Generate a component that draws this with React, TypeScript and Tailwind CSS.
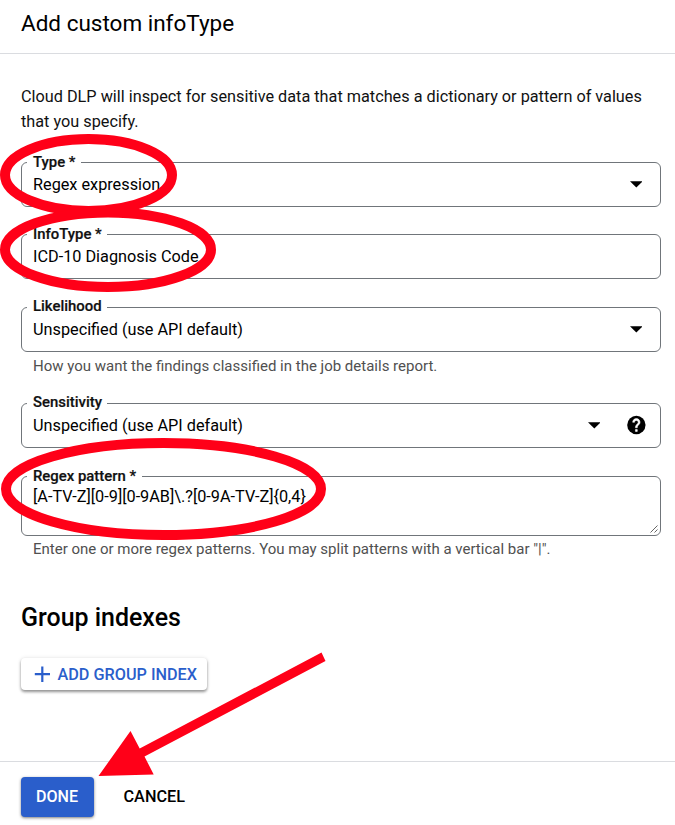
import type { ReactNode } from 'react';

function Caret() {
  return (
    <svg width="12" height="7" viewBox="0 0 12 7" className="shrink-0">
      <path d="M0 0.3h12.6L6.3 6.5z" fill="#000" />
    </svg>
  );
}

function HelpIcon() {
  return (
    <svg width="22" height="22" viewBox="0 0 24 24" className="mb-[2px] shrink-0">
      <circle cx="12.4" cy="12" r="10" fill="#000" />
      <path
        fill="#fff"
        stroke="#fff"
        strokeWidth="0.6"
        transform="translate(0.4 0)"
        d="M13 19h-2v-2h2v2zm2.07-7.75l-.9.92C13.45 12.9 13 13.5 13 15h-2v-.5c0-1.1.45-2.1 1.17-2.83l1.24-1.26c.37-.36.59-.86.59-1.41 0-1.1-.9-2-2-2s-2 .9-2 2H8c0-2.21 1.79-4 4-4s4 1.79 4 4c0 .88-.36 1.68-.93 2.25z"
      />
    </svg>
  );
}

function Field({ label, box, notch, children }: { label: string; box: string; notch: string; children: ReactNode }) {
  return (
    <div className={`relative ml-[21px] flex w-[640px] rounded-[6px] border border-[#70757a] pl-[11px] ${box}`}>
      <span
        className={`absolute left-[5px] h-[18px] bg-white pl-[6px] text-[14.9px] leading-[18px] font-medium whitespace-nowrap text-[#111] [-webkit-text-stroke:0.2px_#111] ${notch}`}
      >
        {label}
      </span>
      {children}
    </div>
  );
}

export default function App() {
  return (
    <div className="relative flex h-[825px] w-[675px] flex-col overflow-hidden bg-white font-[Roboto,sans-serif] text-[16.26px] text-black">
      <header className="flex h-[54px] shrink-0 border-b border-[#dadce0] pt-[8px] pl-[21px]">
        <h1 className="text-[22.5px] leading-[30px] whitespace-nowrap">Add custom infoType</h1>
      </header>
      <main className="flex h-[707px] shrink-0 flex-col">
        <p className="mt-[30px] ml-[21px] h-[78px] text-[16.26px] leading-[25px] whitespace-nowrap text-[#111]">
          Cloud DLP will inspect for sensitive data that matches a dictionary or pattern of values
          <br />
          that you specify.
        </p>
        <Field label="Type *" box="h-[45px] items-center pr-[18px]" notch="-top-[10px] w-[54px]">
          <span className="grow pt-[2px]">Regex expression</span>
          <Caret />
        </Field>
        <Field label="InfoType *" box="mt-[27px] h-[45px] items-center" notch="-top-[10px] w-[80px]">
          <span className="pt-[2px]">ICD-10 Diagnosis Code</span>
        </Field>
        <Field label="Likelihood" box="mt-[28px] h-[45px] items-center pr-[18px]" notch="-top-[11px] w-[80px]">
          <span className="grow pt-[2px]">Unspecified (use API default)</span>
          <Caret />
        </Field>
        <p className="mt-[4px] ml-[33px] h-[47px] text-[15px] leading-[20px] text-[#505050]">
          How you want the findings classified in the job details report.
        </p>
        <Field label="Sensitivity" box="h-[45px] items-center gap-[25px] pr-[13px]" notch="-top-[11px] w-[80px]">
          <span className="grow pt-[2px]">Unspecified (use API default)</span>
          <Caret />
          <HelpIcon />
        </Field>
        <Field label="Regex pattern *" box="mt-[28px] h-[60px] items-end justify-between pr-[2px] pb-[2px]" notch="-top-[10px] w-[115px]">
          <span className="h-[46px] leading-[20px]">{'[A-TV-Z][0-9][0-9AB]\\.?[0-9A-TV-Z]{0,4}'}</span>
          <svg width="8" height="8" viewBox="0 0 8 8" stroke="#555" strokeWidth="0.9">
            <path d="M0.5 7.5l7-7M4.5 7.5l3-3" />
          </svg>
        </Field>
        <p className="mt-[3px] ml-[33px] h-[20px] text-[15px] leading-[20px] text-[#505050]">
          Enter one or more regex patterns. You may split patterns with a vertical bar "|".
        </p>
        <h2 className="mt-[43px] ml-[21px] h-[32px] text-[24.95px] leading-[32px] font-medium">Group indexes</h2>
        <button className="mt-[24px] ml-[21px] flex h-[32px] w-[186px] items-center rounded-[4px] bg-white pl-[13px] text-[16.23px] font-medium whitespace-nowrap text-[#2a5ecb] shadow-[0_2px_3px_rgba(0,0,0,0.4),0_0_4px_rgba(0,0,0,0.1)]">
          <svg width="16" height="16" viewBox="0 0 16 16" className="mr-[7.5px] shrink-0" stroke="#2a5ecb" strokeWidth="2.2">
            <path d="M8.3 0.5v15.5M0.8 8.2h15.2" />
          </svg>
          <span className="pt-[2px]">ADD GROUP INDEX</span>
        </button>
      </main>
      <footer className="flex h-[64px] shrink-0 border-t border-[#dadce0] pt-[15px] pl-[21px]">
        <button className="h-[40px] w-[73px] rounded-[4px] bg-[#2a5ecb] pr-px text-[16.1px] font-medium text-white shadow-[0_1px_3px_rgba(0,0,0,0.5)]">
          DONE
        </button>
        <button className="ml-[29.5px] h-[40px] text-[16.26px] font-medium">CANCEL</button>
      </footer>
      <svg className="pointer-events-none absolute inset-0" width="675" height="825" viewBox="0 0 675 825">
        <g fill="none" stroke="#ff0018" strokeWidth="10">
          <ellipse cx="88.5" cy="175" rx="83.5" ry="36" />
          <ellipse cx="108" cy="249.7" rx="103" ry="37.3" />
          <ellipse cx="163.5" cy="489" rx="157.5" ry="46" />
        </g>
        <path d="M321.5 652.5L325.5 661L144.5 756.5L153.7 774.5L98.5 776L130.5 731L139.7 748.5Z" fill="#ff0018" />
      </svg>
    </div>
  );
}
